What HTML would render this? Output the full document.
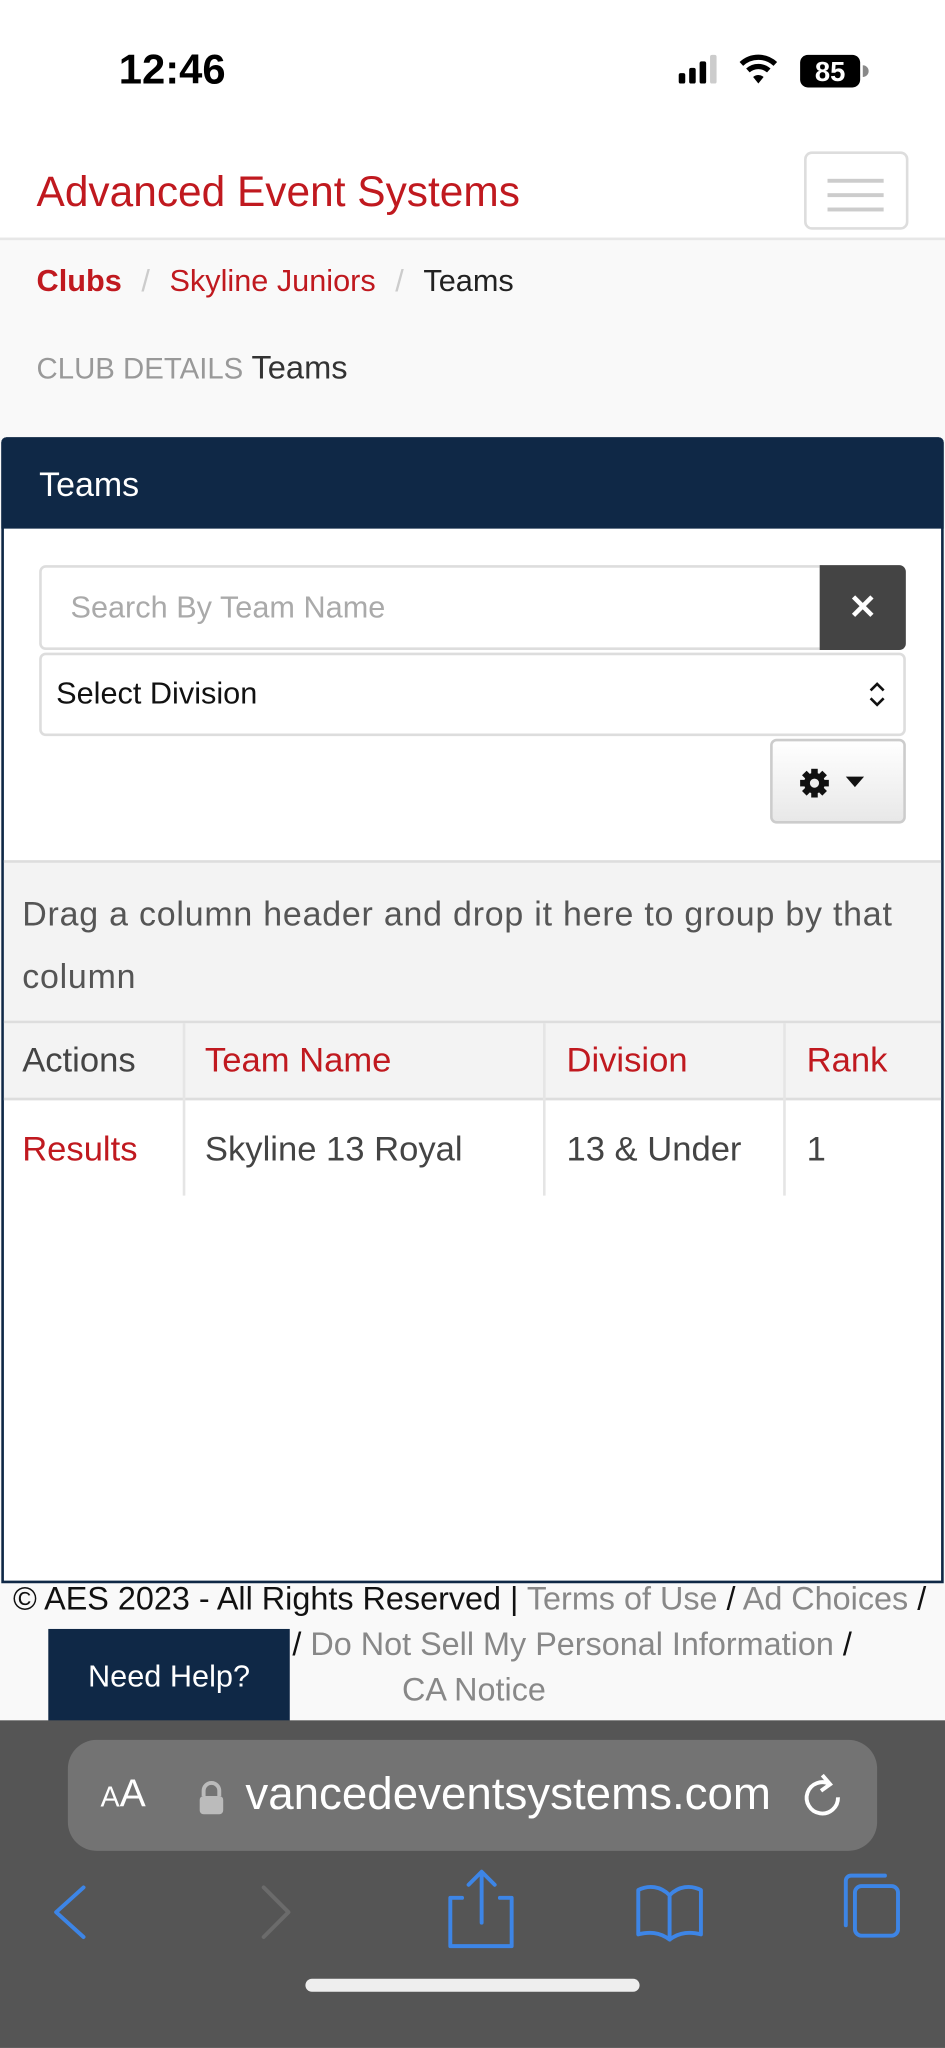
<!DOCTYPE html>
<html><head><meta charset="utf-8"><style>
*{margin:0;padding:0;box-sizing:border-box}
html,body{width:945px;height:2048px;overflow:hidden;background:#fff}
#w{position:absolute;left:0;top:0;width:724px;height:1569px;transform:scale(1.30525);transform-origin:0 0;font-family:"Liberation Sans",sans-serif;}
.a{position:absolute;white-space:nowrap}
.red{color:#c0191f}
</style></head><body><div id="w">
<div class="a" style="left:0;top:0;width:724px;height:184px;background:#fff"></div>
<div class="a" style="left:91px;top:35px;font-size:32px;font-weight:bold;color:#000">12:46</div>
<svg class="a" style="left:518px;top:40px" width="150" height="28" viewBox="0 0 150 28">
<rect x="2" y="16" width="5" height="8" rx="1.5" fill="#000"/><rect x="10" y="12" width="5" height="12" rx="1.5" fill="#000"/><rect x="18" y="7" width="5" height="17" rx="1.5" fill="#000"/><rect x="26" y="2" width="5" height="22" rx="1.5" fill="#ccc"/>
<path d="M50 9a19 19 0 0 1 26 0" stroke="#000" stroke-width="4" fill="none"/><path d="M55 14a12 12 0 0 1 16 0" stroke="#000" stroke-width="4" fill="none"/><path d="M59 19l4 5 4-5a6 6 0 0 0-8 0z" fill="#000"/>
<rect x="95" y="2" width="46" height="25" rx="6" fill="#000"/><path d="M143 10v9a3 3 0 0 0 0-9z" fill="#888"/>
<text x="118" y="22" font-size="21" font-weight="bold" fill="#fff" text-anchor="middle" font-family="Liberation Sans">85</text></svg>
<div class="a red" style="left:28px;top:129px;font-size:32.5px">Advanced Event Systems</div>
<div class="a" style="left:616px;top:116px;width:80px;height:60px;border:2px solid #ddd;border-radius:6px"></div>
<div class="a" style="left:634px;top:137px;width:43px;height:3px;background:#ccc;box-shadow:0 11px 0 #ccc,0 22px 0 #ccc"></div>
<div class="a" style="left:0;top:182px;width:724px;height:1138px;background:#f9f9f9;border-top:2px solid #e7e7e7"></div>
<div class="a" style="left:28px;top:202px;font-size:23.5px"><b class="red">Clubs</b><span style="color:#ccc;padding:0 15px">/</span><span class="red">Skyline Juniors</span><span style="color:#ccc;padding:0 15px">/</span><span style="color:#222">Teams</span></div>
<div class="a" style="left:28px;top:268px;font-size:22.5px"><span style="color:#999">CLUB DETAILS</span> <span style="color:#333;font-size:25px">Teams</span></div>
<div class="a" style="left:1px;top:335px;width:722px;height:878px;background:#fff;border:2px solid #0f2846;border-radius:4px 4px 0 0"></div>
<div class="a" style="left:1px;top:335px;width:722px;height:70px;background:#0f2846;border-radius:4px 4px 0 0"></div>
<div class="a" style="left:30px;top:356px;font-size:26px;color:#fff">Teams</div>
<div class="a" style="left:30px;top:433px;width:600px;height:65px;border:2px solid #ddd;border-radius:5px 0 0 5px"></div>
<div class="a" style="left:54px;top:452px;font-size:23.5px;color:#aaa">Search By Team Name</div>
<div class="a" style="left:628px;top:433px;width:66px;height:65px;background:#444;border-radius:0 5px 5px 0;color:#fff;font-size:26px;font-weight:bold;text-align:center;line-height:65px">✕</div>
<div class="a" style="left:30px;top:500px;width:664px;height:64px;border:2px solid #ddd;border-radius:5px"></div>
<div class="a" style="left:43px;top:518px;font-size:23.5px;color:#111">Select Division</div>
<svg class="a" style="left:664px;top:521px" width="16" height="22"><path d="M3 8l5-5 5 5M3 14l5 5 5-5" stroke="#111" stroke-width="2" fill="none"/></svg>
<div class="a" style="left:590px;top:566px;width:104px;height:65px;border:2px solid #ccc;border-radius:5px;background:linear-gradient(#fff,#e8e8e8)"></div>
<svg class="a" style="left:611px;top:587px" width="26" height="26" viewBox="0 0 26 26"><g fill="#111"><circle cx="13" cy="13" r="8"/><rect x="10.5" y="2" width="5" height="22"/><rect x="2" y="10.5" width="22" height="5"/><rect x="10.5" y="2" width="5" height="22" transform="rotate(45 13 13)"/><rect x="10.5" y="2" width="5" height="22" transform="rotate(-45 13 13)"/></g><circle cx="13" cy="13" r="3.5" fill="#eee"/></svg>
<svg class="a" style="left:647px;top:594px" width="16" height="10"><path d="M1 1h14l-7 8z" fill="#111"/></svg>
<div class="a" style="left:3px;top:659px;width:718px;height:125px;background:#f3f3f3;border-top:2px solid #ddd;border-bottom:2px solid #ddd"></div>
<div class="a" style="left:17px;top:676px;font-size:26px;letter-spacing:0.6px;color:#555;line-height:48px">Drag a column header and drop it here to group by that<br>column</div>
<div class="a" style="left:3px;top:784px;width:718px;height:59px;background:#f3f3f3;border-bottom:2px solid #ddd"></div>
<div class="a" style="left:140px;top:784px;width:2px;height:132px;background:#e5e5e5"></div>
<div class="a" style="left:416px;top:784px;width:2px;height:132px;background:#e5e5e5"></div>
<div class="a" style="left:600px;top:784px;width:2px;height:132px;background:#e5e5e5"></div>
<div class="a" style="left:17px;top:797px;font-size:26.5px;color:#444">Actions</div>
<div class="a red" style="left:157px;top:797px;font-size:26.5px">Team Name</div>
<div class="a red" style="left:434px;top:797px;font-size:26.5px">Division</div>
<div class="a red" style="left:618px;top:797px;font-size:26.5px">Rank</div>
<div class="a red" style="left:17px;top:865px;font-size:26.5px">Results</div>
<div class="a" style="left:157px;top:865px;font-size:26.5px;color:#444">Skyline 13 Royal</div>
<div class="a" style="left:434px;top:865px;font-size:26.5px;color:#444">13 &amp; Under</div>
<div class="a" style="left:618px;top:865px;font-size:26.5px;color:#444">1</div>
<div class="a" style="left:10px;top:1212px;font-size:24.8px;color:#111">© AES 2023 - All Rights Reserved | <span style="color:#888">Terms of Use</span> / <span style="color:#888">Ad Choices</span> /</div>
<div class="a" style="left:224px;top:1247px;font-size:24.8px;color:#111">/ <span style="color:#888">Do Not Sell My Personal Information</span> /</div>
<div class="a" style="left:308px;top:1282px;font-size:24.8px;color:#888">CA Notice</div>
<div class="a" style="left:37px;top:1248px;width:185px;height:72px;background:#0f2846;color:#fff;font-size:23.5px;text-align:center;line-height:72px">Need Help?</div>
<div class="a" style="left:0;top:1318px;width:724px;height:251px;background:#555"></div>
<div class="a" style="left:52px;top:1333px;width:620px;height:85px;background:#737373;border-radius:22px"></div>
<div class="a" style="left:77px;top:1358px;color:#fff"><span style="font-size:22px">A</span><span style="font-size:30px">A</span></div>
<svg class="a" style="left:150px;top:1364px" width="24" height="28"><path d="M6 12V8a6 6 0 0 1 12 0v4" stroke="#bbb" stroke-width="3" fill="none"/><rect x="3" y="12" width="18" height="14" rx="3" fill="#bbb"/></svg>
<div class="a" style="left:188px;top:1355px;font-size:35px;color:#fff">vancedeventsystems.com</div>
<svg class="a" style="left:612px;top:1357px" width="36" height="36"><path d="M24 10A12 12 0 1 0 30 20" stroke="#fff" stroke-width="3" fill="none"/><path d="M18 3l6 7-7 5" stroke="#fff" stroke-width="3" fill="none"/></svg>
<svg class="a" style="left:0;top:1430px" width="724" height="70" fill="none" stroke-width="3" stroke-linecap="round" stroke-linejoin="round">
<path d="M64 16L43 35l21 19" stroke="#3d85e6"/><path d="M202 16l19 19-19 19" stroke="#6b6b6b"/>
<path d="M354 24h-9v37h47V24h-9M369 5v38M359 14l10-10 10 10" stroke="#3d85e6"/>
<path d="M513 22v34c-8-6-16-6-24-4V18c8-4 17-3 24 4zm0 0c7-7 16-8 24-4v34c-8-2-16-2-24 4" stroke="#3d85e6"/>
<rect x="655" y="15" width="33" height="38" rx="5" stroke="#3d85e6"/><path d="M648 45V11a4 4 0 0 1 4-4h26" stroke="#3d85e6"/></svg>
<div class="a" style="left:234px;top:1516px;width:256px;height:10px;border-radius:5px;background:#eee"></div>
</div></body></html>
